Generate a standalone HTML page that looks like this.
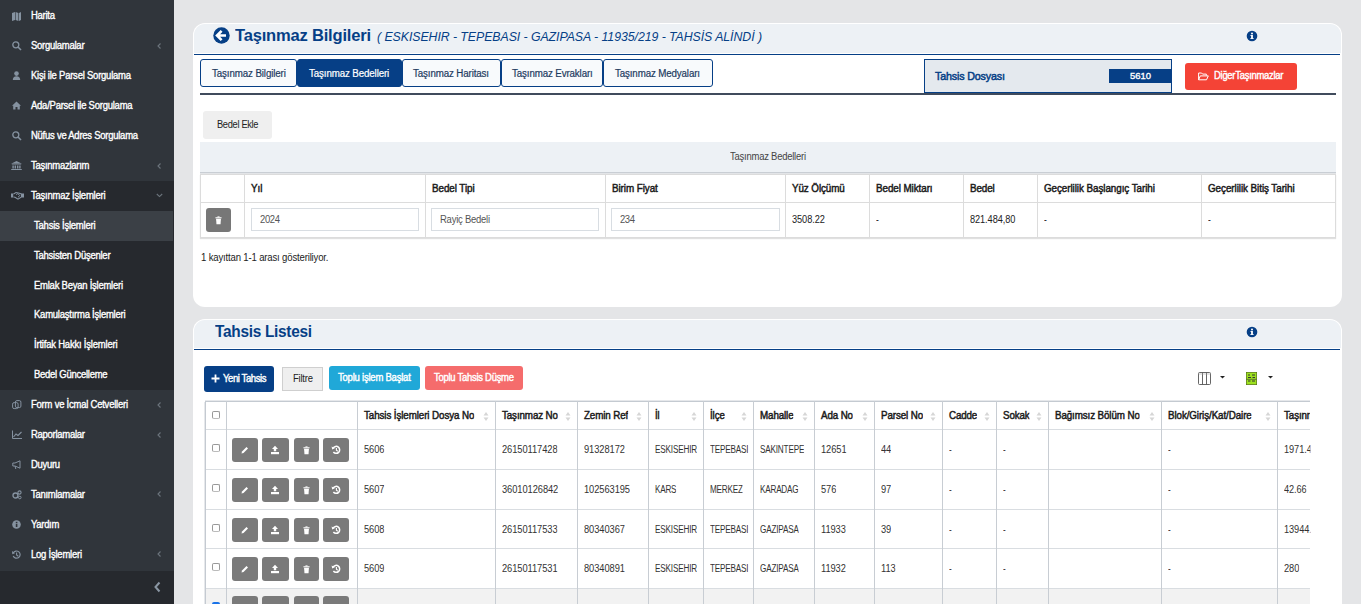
<!DOCTYPE html>
<html><head><meta charset="utf-8"><style>
html,body{margin:0;padding:0;width:1361px;height:604px;overflow:hidden;background:#e4e5e7;font-family:'Liberation Sans', sans-serif;}
body{position:relative;}
</style></head><body>
<div style="position:absolute;left:0px;top:0px;width:174px;height:604px;background:#30353b;;z-index:1"></div>
<div style="position:absolute;left:0px;top:181px;width:174px;height:209px;background:#26292e;;z-index:1"></div>
<div style="position:absolute;left:0px;top:211px;width:173px;height:30px;background:#3b4046;;z-index:1"></div>
<div style="position:absolute;left:0px;top:571px;width:174px;height:33px;background:#26292e;;z-index:1"></div>
<svg style="position:absolute;left:12px;top:11.5px;z-index:6" width="12" height="10" viewBox="0 0 12 10" overflow="visible"><path d="M0 1 L3 0 L3 8 L0 9 Z M3.6 0 L6.4 1 L6.4 9 L3.6 8 Z M7 1 L9 0 L9 8 L7 9 Z" fill="#8592a0"/></svg>
<svg style="position:absolute;left:12px;top:41.4px;z-index:6" width="12" height="10" viewBox="0 0 12 10" overflow="visible"><circle cx="3.8" cy="3.8" r="3" fill="none" stroke="#8592a0" stroke-width="1.3"/><path d="M6 6 L9 9" stroke="#8592a0" stroke-width="1.6"/></svg>
<svg style="position:absolute;left:157px;top:42.9px;z-index:6" width="5" height="6" viewBox="0 0 5 6"><path d="M3.5 0.5 L1 3 L3.5 5.5" fill="none" stroke="#6c757d" stroke-width="1.1"/></svg>
<svg style="position:absolute;left:12px;top:71.3px;z-index:6" width="12" height="10" viewBox="0 0 12 10" overflow="visible"><circle cx="4.5" cy="2.6" r="2.3" fill="#8592a0"/><path d="M0.8 9 Q0.8 5.2 4.5 5.2 Q8.2 5.2 8.2 9 Z" fill="#8592a0"/></svg>
<svg style="position:absolute;left:12px;top:101.19999999999999px;z-index:6" width="12" height="10" viewBox="0 0 12 10" overflow="visible"><path d="M0 4.8 L4.5 0.5 L9 4.8 L7.8 4.8 L7.8 8.5 L5.5 8.5 L5.5 6 L3.5 6 L3.5 8.5 L1.2 8.5 L1.2 4.8 Z" fill="#8592a0"/></svg>
<svg style="position:absolute;left:12px;top:131.1px;z-index:6" width="12" height="10" viewBox="0 0 12 10" overflow="visible"><circle cx="3.8" cy="3.8" r="3" fill="none" stroke="#8592a0" stroke-width="1.3"/><path d="M6 6 L9 9" stroke="#8592a0" stroke-width="1.6"/></svg>
<svg style="position:absolute;left:12px;top:161.0px;z-index:6" width="12" height="10" viewBox="0 0 12 10" overflow="visible"><path d="M-1 2.8 L4.5 0 L10 2.8 Z M-0.2 3.4 H9.2 V4.1 H-0.2 Z M0.4 4.5 H1.8 V7.6 H0.4Z M2.6 4.5 H4 V7.6 H2.6Z M5 4.5 H6.4 V7.6 H5Z M7.2 4.5 H8.6 V7.6 H7.2Z M-0.8 8 H9.8 V9 H-0.8Z" fill="#8592a0"/></svg>
<svg style="position:absolute;left:157px;top:162.5px;z-index:6" width="5" height="6" viewBox="0 0 5 6"><path d="M3.5 0.5 L1 3 L3.5 5.5" fill="none" stroke="#6c757d" stroke-width="1.1"/></svg>
<svg style="position:absolute;left:12px;top:190.89999999999998px;z-index:6" width="12" height="10" viewBox="0 0 12 10" overflow="visible"><path d="M-1 2.5 H1.2 V6.5 H-1 Z M10 2.5 H12 V6.5 H10 Z" fill="#8592a0"/><path d="M1.5 3 L4 1.5 L6.5 2 L9.5 3 V6 L6 8.2 L3 6.2 L1.5 6" fill="none" stroke="#8592a0" stroke-width="1.1"/><path d="M4.2 3.8 L5.8 2.6 L7.8 4.6 L6 6.2" fill="none" stroke="#8592a0" stroke-width="1"/></svg>
<svg style="position:absolute;left:156px;top:193.39999999999998px;z-index:6" width="7" height="5" viewBox="0 0 7 5"><path d="M0.8 1 L3.5 3.6 L6.2 1" fill="none" stroke="#6c757d" stroke-width="1.1"/></svg>
<svg style="position:absolute;left:12px;top:400.2px;z-index:6" width="12" height="10" viewBox="0 0 12 10" overflow="visible"><rect x="0.6" y="2.6" width="5.5" height="6" rx="1.5" fill="none" stroke="#8592a0" stroke-width="1"/><rect x="3.4" y="0.6" width="5.5" height="7" rx="1.5" fill="none" stroke="#8592a0" stroke-width="1"/></svg>
<svg style="position:absolute;left:157px;top:401.7px;z-index:6" width="5" height="6" viewBox="0 0 5 6"><path d="M3.5 0.5 L1 3 L3.5 5.5" fill="none" stroke="#6c757d" stroke-width="1.1"/></svg>
<svg style="position:absolute;left:12px;top:430.09999999999997px;z-index:6" width="12" height="10" viewBox="0 0 12 10" overflow="visible"><path d="M0.5 0.5 V8.5 H10" fill="none" stroke="#8592a0" stroke-width="1"/><path d="M1.5 7 L4 4 L6 5.5 L9.5 2" fill="none" stroke="#8592a0" stroke-width="1.1"/></svg>
<svg style="position:absolute;left:157px;top:431.59999999999997px;z-index:6" width="5" height="6" viewBox="0 0 5 6"><path d="M3.5 0.5 L1 3 L3.5 5.5" fill="none" stroke="#6c757d" stroke-width="1.1"/></svg>
<svg style="position:absolute;left:12px;top:460.0px;z-index:6" width="12" height="10" viewBox="0 0 12 10" overflow="visible"><path d="M0.8 3 H3 L8 0.8 V8.2 L3 6 H0.8 Z M3 6 L3.8 9" fill="none" stroke="#8592a0" stroke-width="1"/></svg>
<svg style="position:absolute;left:12px;top:489.9px;z-index:6" width="12" height="10" viewBox="0 0 12 10" overflow="visible"><circle cx="3.5" cy="5.5" r="2.5" fill="none" stroke="#8592a0" stroke-width="1.4"/><circle cx="7.5" cy="2.5" r="1.6" fill="none" stroke="#8592a0" stroke-width="1.1"/><circle cx="7.8" cy="7.5" r="1.3" fill="none" stroke="#8592a0" stroke-width="1"/></svg>
<svg style="position:absolute;left:157px;top:491.4px;z-index:6" width="5" height="6" viewBox="0 0 5 6"><path d="M3.5 0.5 L1 3 L3.5 5.5" fill="none" stroke="#6c757d" stroke-width="1.1"/></svg>
<svg style="position:absolute;left:12px;top:519.8px;z-index:6" width="12" height="10" viewBox="0 0 12 10" overflow="visible"><circle cx="4.5" cy="4.5" r="4.3" fill="#8592a0"/><rect x="3.8" y="3.8" width="1.6" height="3.2" fill="#30353b"/><rect x="3.8" y="1.8" width="1.6" height="1.3" fill="#30353b"/></svg>
<svg style="position:absolute;left:12px;top:549.6999999999999px;z-index:6" width="12" height="10" viewBox="0 0 12 10" overflow="visible"><path d="M1.3 3 A3.6 3.6 0 1 1 1.2 6" fill="none" stroke="#8592a0" stroke-width="1.2"/><path d="M0 1 L0.3 4.2 L3 3.2 Z" fill="#8592a0"/><path d="M4.6 2.5 V5 L6.3 6.2" fill="none" stroke="#8592a0" stroke-width="1.1"/></svg>
<svg style="position:absolute;left:157px;top:551.1999999999999px;z-index:6" width="5" height="6" viewBox="0 0 5 6"><path d="M3.5 0.5 L1 3 L3.5 5.5" fill="none" stroke="#6c757d" stroke-width="1.1"/></svg>
<svg style="position:absolute;left:153px;top:581px;z-index:6" width="9" height="12" viewBox="0 0 9 12"><path d="M6.5 1.5 L2.5 6 L6.5 10.5" fill="none" stroke="#8a96a3" stroke-width="2"/></svg>
<div style="position:absolute;left:175px;top:0px;width:1186px;height:604px;background:#e4e5e7;;z-index:0"></div>
<div style="position:absolute;left:193px;top:23px;width:1149px;height:284px;background:#fff;border-radius:12px;overflow:hidden;z-index:1"><div style="position:absolute;left:1px;top:1px;width:1147px;height:29px;background:#edf1f5;border-radius:11px 11px 0 0"></div><div style="position:absolute;left:1px;top:31px;width:1146px;height:1px;background:#063f86"></div></div>
<svg style="position:absolute;left:213px;top:27px;z-index:6" width="17" height="17" viewBox="0 0 17 17"><circle cx="8.5" cy="8.5" r="8.2" fill="#063f86"/><path d="M8.6 3.8 L4 8.5 L8.6 13.2 M4.3 8.5 H13" fill="none" stroke="#fff" stroke-width="2.6" stroke-linejoin="miter"/></svg>
<svg style="position:absolute;left:1245.5px;top:29.5px;z-index:6" width="12" height="12" viewBox="0 0 12 12"><circle cx="6" cy="6" r="5.3" fill="#063f86"/><rect x="5.1" y="5" width="1.8" height="3.6" fill="#fff"/><rect x="4.4" y="8" width="3.2" height="0.9" fill="#fff"/><rect x="4.4" y="5" width="1.6" height="0.8" fill="#fff"/><circle cx="6" cy="3.5" r="1" fill="#fff"/></svg>
<div style="position:absolute;left:200px;top:59px;width:97px;height:28px;background:#f8fafc;box-sizing:border-box;border:1px solid #063f86;border-radius:3px;z-index:3"></div>
<div style="position:absolute;left:297px;top:59px;width:105px;height:28px;background:#063f86;box-sizing:border-box;border:1px solid #063f86;border-radius:3px;z-index:3"></div>
<div style="position:absolute;left:402px;top:59px;width:99px;height:28px;background:#f8fafc;box-sizing:border-box;border:1px solid #063f86;border-radius:3px;z-index:3"></div>
<div style="position:absolute;left:501px;top:59px;width:102px;height:28px;background:#f8fafc;box-sizing:border-box;border:1px solid #063f86;border-radius:3px;z-index:3"></div>
<div style="position:absolute;left:603px;top:59px;width:110px;height:28px;background:#f8fafc;box-sizing:border-box;border:1px solid #063f86;border-radius:3px;z-index:3"></div>
<div style="position:absolute;left:200px;top:93px;width:1136px;height:2px;background:#404b5c;;z-index:2"></div>
<div style="position:absolute;left:924px;top:59px;width:248px;height:34px;background:#e4e9ee;box-sizing:border-box;border:1px solid #063f86;z-index:3"></div>
<div style="position:absolute;left:1109px;top:69px;width:62px;height:14px;background:#063f86;;z-index:4"></div>
<div style="position:absolute;left:1185px;top:63px;width:112px;height:27px;background:#f44336;border-radius:3px;z-index:3"></div>
<svg style="position:absolute;left:1197.5px;top:71.5px;z-index:6" width="11" height="9" viewBox="0 0 11 9"><path d="M0.6 7.8 V1 H3.6 L4.6 2.1 H8.3 V3.6 M0.6 7.8 L2.3 3.9 H10.3 L8.5 7.8 Z" fill="none" stroke="#fff" stroke-width="1" stroke-linejoin="round"/></svg>
<div style="position:absolute;left:203px;top:111px;width:69px;height:28px;background:#efefef;border-radius:3px;z-index:3"></div>
<div style="position:absolute;left:200px;top:142px;width:1136px;height:30px;background:#edf1f5;;z-index:2"></div>
<div style="position:absolute;left:200px;top:172px;width:1136px;height:1px;background:#c9ced4;;z-index:2"></div>
<div style="position:absolute;left:200px;top:173px;width:1136px;height:1px;background:#e3e5e8;;z-index:2"></div>
<div style="position:absolute;left:200px;top:174px;width:1136px;height:64px;background:#fff;box-sizing:border-box;border:1px solid #dcdcdc;box-shadow:0 1px 1px rgba(0,0,0,0.12);z-index:3"></div>
<div style="position:absolute;left:200px;top:202px;width:1136px;height:1px;background:#dcdcdc;;z-index:4"></div>
<div style="position:absolute;left:244px;top:175px;width:1px;height:62px;background:#dcdcdc;;z-index:4"></div>
<div style="position:absolute;left:425px;top:175px;width:1px;height:62px;background:#dcdcdc;;z-index:4"></div>
<div style="position:absolute;left:605px;top:175px;width:1px;height:62px;background:#dcdcdc;;z-index:4"></div>
<div style="position:absolute;left:785px;top:175px;width:1px;height:62px;background:#dcdcdc;;z-index:4"></div>
<div style="position:absolute;left:869px;top:175px;width:1px;height:62px;background:#dcdcdc;;z-index:4"></div>
<div style="position:absolute;left:963px;top:175px;width:1px;height:62px;background:#dcdcdc;;z-index:4"></div>
<div style="position:absolute;left:1037px;top:175px;width:1px;height:62px;background:#dcdcdc;;z-index:4"></div>
<div style="position:absolute;left:1201px;top:175px;width:1px;height:62px;background:#dcdcdc;;z-index:4"></div>
<div style="position:absolute;left:206px;top:208px;width:25px;height:24px;background:#777;border-radius:3px;z-index:5"></div>
<svg style="position:absolute;left:215.0px;top:215.5px;z-index:12" width="7" height="9" viewBox="0 0 8 10"><rect x="0.5" y="1.3" width="7" height="1.2" fill="#fff"/><rect x="2.8" y="0.3" width="2.4" height="1.2" fill="#fff"/><path d="M1.2 3 H6.8 L6.3 9.2 H1.7 Z" fill="#fff"/></svg>
<div style="position:absolute;left:251px;top:208px;width:168px;height:23px;background:#fff;box-sizing:border-box;border:1px solid #d8dde2;z-index:5"></div>
<div style="position:absolute;left:431px;top:208px;width:168px;height:23px;background:#fff;box-sizing:border-box;border:1px solid #d8dde2;z-index:5"></div>
<div style="position:absolute;left:611px;top:208px;width:169px;height:23px;background:#fff;box-sizing:border-box;border:1px solid #d8dde2;z-index:5"></div>
<div style="position:absolute;left:193px;top:319px;width:1149px;height:300px;background:#fff;border-radius:12px;overflow:hidden;z-index:1"><div style="position:absolute;left:1px;top:1px;width:1147px;height:28px;background:#edf1f5;border-radius:11px 11px 0 0"></div><div style="position:absolute;left:1px;top:30px;width:1146px;height:1px;background:#063f86"></div></div>
<svg style="position:absolute;left:1245.5px;top:325.5px;z-index:6" width="12" height="12" viewBox="0 0 12 12"><circle cx="6" cy="6" r="5.3" fill="#063f86"/><rect x="5.1" y="5" width="1.8" height="3.6" fill="#fff"/><rect x="4.4" y="8" width="3.2" height="0.9" fill="#fff"/><rect x="4.4" y="5" width="1.6" height="0.8" fill="#fff"/><circle cx="6" cy="3.5" r="1" fill="#fff"/></svg>
<div style="position:absolute;left:204px;top:366px;width:70px;height:26px;background:#063f86;border-radius:3px;z-index:3"></div>
<svg style="position:absolute;left:211px;top:374px;z-index:6" width="9" height="9" viewBox="0 0 9 9"><path d="M4.5 0.5 V8.5 M0.5 4.5 H8.5" stroke="#fff" stroke-width="1.8"/></svg>
<div style="position:absolute;left:282px;top:367px;width:41px;height:24px;background:#efefef;box-sizing:border-box;border:1px solid #cfcfcf;z-index:3"></div>
<div style="position:absolute;left:329px;top:366px;width:91px;height:24px;background:#20a8d8;border-radius:3px;z-index:3"></div>
<div style="position:absolute;left:425px;top:366px;width:98px;height:24px;background:#f56c6c;border-radius:3px;z-index:3"></div>
<svg style="position:absolute;left:1198px;top:372px;z-index:6" width="13" height="13" viewBox="0 0 13 13"><rect x="0.5" y="0.5" width="12" height="12" rx="1" fill="#fff" stroke="#555" stroke-width="0.9"/><path d="M4.5 0.5 V12.5 M8.5 0.5 V12.5" stroke="#555" stroke-width="0.9"/><path d="M0.5 2 H12.5" stroke="#aaa" stroke-width="0.6"/></svg>
<svg style="position:absolute;left:1220px;top:376px;z-index:6" width="5" height="3" viewBox="0 0 5 3"><path d="M0 0 H5 L2.5 2.5 Z" fill="#222"/></svg>
<svg style="position:absolute;left:1246px;top:372px;z-index:6" width="11" height="13" viewBox="0 0 11 13"><rect x="0.4" y="0.4" width="10.2" height="12.2" fill="#9de21f" stroke="#5a7d10" stroke-width="0.8"/><path d="M2 3 H4 M6 3 H9 M2 5.5 H5 M6.5 5.5 H9 M2 9 H4.5 M6 9 H9" stroke="#333" stroke-width="1"/><path d="M0.5 7.3 H10.5" stroke="#333" stroke-width="0.6"/></svg>
<svg style="position:absolute;left:1268px;top:376px;z-index:6" width="5" height="3" viewBox="0 0 5 3"><path d="M0 0 H5 L2.5 2.5 Z" fill="#222"/></svg>
<div style="position:absolute;left:193px;top:395px;width:1117px;height:209px;overflow:hidden;z-index:3">
<div style="position:absolute;left:12px;top:194px;width:1200px;height:30px;background:#f2f2f2;;z-index:1"></div>
<div style="position:absolute;left:12px;top:5px;width:1200px;height:1px;background:#e6e8eb;;z-index:2"></div>
<div style="position:absolute;left:12px;top:6px;width:1200px;height:1px;background:#c4cad1;;z-index:2"></div>
<div style="position:absolute;left:12px;top:34px;width:1200px;height:1px;background:#d9dde1;;z-index:2"></div>
<div style="position:absolute;left:12px;top:74px;width:1200px;height:1px;background:#d9dde1;;z-index:2"></div>
<div style="position:absolute;left:12px;top:114px;width:1200px;height:1px;background:#d9dde1;;z-index:2"></div>
<div style="position:absolute;left:12px;top:153px;width:1200px;height:1px;background:#d9dde1;;z-index:2"></div>
<div style="position:absolute;left:12px;top:193px;width:1200px;height:1px;background:#d9dde1;;z-index:2"></div>
<div style="position:absolute;left:12px;top:6px;width:1px;height:220px;background:#c4cad1;;z-index:2"></div>
<div style="position:absolute;left:33px;top:6px;width:1px;height:220px;background:#c8cdd3;;z-index:2"></div>
<div style="position:absolute;left:164px;top:6px;width:1px;height:220px;background:#c8cdd3;;z-index:2"></div>
<div style="position:absolute;left:302px;top:6px;width:1px;height:220px;background:#c8cdd3;;z-index:2"></div>
<div style="position:absolute;left:384px;top:6px;width:1px;height:220px;background:#c8cdd3;;z-index:2"></div>
<div style="position:absolute;left:455px;top:6px;width:1px;height:220px;background:#c8cdd3;;z-index:2"></div>
<div style="position:absolute;left:510px;top:6px;width:1px;height:220px;background:#c8cdd3;;z-index:2"></div>
<div style="position:absolute;left:560px;top:6px;width:1px;height:220px;background:#c8cdd3;;z-index:2"></div>
<div style="position:absolute;left:621px;top:6px;width:1px;height:220px;background:#c8cdd3;;z-index:2"></div>
<div style="position:absolute;left:681px;top:6px;width:1px;height:220px;background:#c8cdd3;;z-index:2"></div>
<div style="position:absolute;left:749px;top:6px;width:1px;height:220px;background:#c8cdd3;;z-index:2"></div>
<div style="position:absolute;left:803px;top:6px;width:1px;height:220px;background:#c8cdd3;;z-index:2"></div>
<div style="position:absolute;left:855px;top:6px;width:1px;height:220px;background:#c8cdd3;;z-index:2"></div>
<div style="position:absolute;left:968px;top:6px;width:1px;height:220px;background:#c8cdd3;;z-index:2"></div>
<div style="position:absolute;left:1084px;top:6px;width:1px;height:220px;background:#c8cdd3;;z-index:2"></div>
<div style="position:absolute;left:11px;top:7px;width:1px;height:220px;background:#e6e8eb;;z-index:2"></div>
</div>
<svg style="position:absolute;left:483px;top:411px;z-index:8" width="6" height="11" viewBox="0 0 6 11"><path d="M0.5 4.5 L3 1 L5.5 4.5 Z M0.5 6.5 L3 10 L5.5 6.5 Z" fill="#d6d6d6"/></svg>
<svg style="position:absolute;left:565px;top:411px;z-index:8" width="6" height="11" viewBox="0 0 6 11"><path d="M0.5 4.5 L3 1 L5.5 4.5 Z M0.5 6.5 L3 10 L5.5 6.5 Z" fill="#d6d6d6"/></svg>
<svg style="position:absolute;left:636px;top:411px;z-index:8" width="6" height="11" viewBox="0 0 6 11"><path d="M0.5 4.5 L3 1 L5.5 4.5 Z M0.5 6.5 L3 10 L5.5 6.5 Z" fill="#d6d6d6"/></svg>
<svg style="position:absolute;left:691px;top:411px;z-index:8" width="6" height="11" viewBox="0 0 6 11"><path d="M0.5 4.5 L3 1 L5.5 4.5 Z M0.5 6.5 L3 10 L5.5 6.5 Z" fill="#d6d6d6"/></svg>
<svg style="position:absolute;left:741px;top:411px;z-index:8" width="6" height="11" viewBox="0 0 6 11"><path d="M0.5 4.5 L3 1 L5.5 4.5 Z M0.5 6.5 L3 10 L5.5 6.5 Z" fill="#d6d6d6"/></svg>
<svg style="position:absolute;left:802px;top:411px;z-index:8" width="6" height="11" viewBox="0 0 6 11"><path d="M0.5 4.5 L3 1 L5.5 4.5 Z M0.5 6.5 L3 10 L5.5 6.5 Z" fill="#d6d6d6"/></svg>
<svg style="position:absolute;left:862px;top:411px;z-index:8" width="6" height="11" viewBox="0 0 6 11"><path d="M0.5 4.5 L3 1 L5.5 4.5 Z M0.5 6.5 L3 10 L5.5 6.5 Z" fill="#d6d6d6"/></svg>
<svg style="position:absolute;left:930px;top:411px;z-index:8" width="6" height="11" viewBox="0 0 6 11"><path d="M0.5 4.5 L3 1 L5.5 4.5 Z M0.5 6.5 L3 10 L5.5 6.5 Z" fill="#d6d6d6"/></svg>
<svg style="position:absolute;left:984px;top:411px;z-index:8" width="6" height="11" viewBox="0 0 6 11"><path d="M0.5 4.5 L3 1 L5.5 4.5 Z M0.5 6.5 L3 10 L5.5 6.5 Z" fill="#d6d6d6"/></svg>
<svg style="position:absolute;left:1036px;top:411px;z-index:8" width="6" height="11" viewBox="0 0 6 11"><path d="M0.5 4.5 L3 1 L5.5 4.5 Z M0.5 6.5 L3 10 L5.5 6.5 Z" fill="#d6d6d6"/></svg>
<svg style="position:absolute;left:1149px;top:411px;z-index:8" width="6" height="11" viewBox="0 0 6 11"><path d="M0.5 4.5 L3 1 L5.5 4.5 Z M0.5 6.5 L3 10 L5.5 6.5 Z" fill="#d6d6d6"/></svg>
<svg style="position:absolute;left:1265px;top:411px;z-index:8" width="6" height="11" viewBox="0 0 6 11"><path d="M0.5 4.5 L3 1 L5.5 4.5 Z M0.5 6.5 L3 10 L5.5 6.5 Z" fill="#d6d6d6"/></svg>
<div style="position:absolute;left:212px;top:411px;width:8px;height:8px;background:#fff;box-sizing:border-box;border:1px solid #999;border-bottom-color:#bbb;border-radius:2px;z-index:8"></div>
<div style="position:absolute;left:212px;top:444px;width:8px;height:8px;background:#fff;box-sizing:border-box;border:1px solid #999;border-bottom-color:#bbb;border-radius:2px;z-index:8"></div>
<div style="position:absolute;left:232px;top:438px;width:26px;height:24px;background:#7a7a7a;border-radius:3px;z-index:8"></div>
<div style="position:absolute;left:262px;top:438px;width:27px;height:24px;background:#7a7a7a;border-radius:3px;z-index:8"></div>
<div style="position:absolute;left:294px;top:438px;width:25px;height:24px;background:#7a7a7a;border-radius:3px;z-index:8"></div>
<div style="position:absolute;left:323px;top:438px;width:26px;height:24px;background:#7a7a7a;border-radius:3px;z-index:8"></div>
<svg style="position:absolute;left:240px;top:445px;z-index:9" width="10" height="10" viewBox="0 0 10 10"><path d="M1.5 8.5 L2 6.5 L6.5 2 L8 3.5 L3.5 8 Z" fill="#fff"/></svg>
<svg style="position:absolute;left:270px;top:445px;z-index:9" width="10" height="10" viewBox="0 0 10 10"><path d="M5 0.8 L8 4 H6.2 V6.3 H3.8 V4 H2 Z" fill="#fff"/><rect x="1" y="7" width="8" height="2.2" fill="#fff"/></svg>
<svg style="position:absolute;left:303.0px;top:445.5px;z-index:12" width="7" height="9" viewBox="0 0 8 10"><rect x="0.5" y="1.3" width="7" height="1.2" fill="#fff"/><rect x="2.8" y="0.3" width="2.4" height="1.2" fill="#fff"/><path d="M1.2 3 H6.8 L6.3 9.2 H1.7 Z" fill="#fff"/></svg>
<svg style="position:absolute;left:331px;top:445px;z-index:9" width="10" height="10" viewBox="0 0 10 10"><path d="M2.2 3 A3.5 3.5 0 1 1 2.4 7" fill="none" stroke="#fff" stroke-width="1.5"/><path d="M0.6 1.4 L1.2 4.6 L3.8 3.2 Z" fill="#fff"/><path d="M5.4 3 V5.3 L6.8 6.2" fill="none" stroke="#fff" stroke-width="1.1"/></svg>
<div style="position:absolute;left:212px;top:484px;width:8px;height:8px;background:#fff;box-sizing:border-box;border:1px solid #999;border-bottom-color:#bbb;border-radius:2px;z-index:8"></div>
<div style="position:absolute;left:232px;top:478px;width:26px;height:24px;background:#7a7a7a;border-radius:3px;z-index:8"></div>
<div style="position:absolute;left:262px;top:478px;width:27px;height:24px;background:#7a7a7a;border-radius:3px;z-index:8"></div>
<div style="position:absolute;left:294px;top:478px;width:25px;height:24px;background:#7a7a7a;border-radius:3px;z-index:8"></div>
<div style="position:absolute;left:323px;top:478px;width:26px;height:24px;background:#7a7a7a;border-radius:3px;z-index:8"></div>
<svg style="position:absolute;left:240px;top:485px;z-index:9" width="10" height="10" viewBox="0 0 10 10"><path d="M1.5 8.5 L2 6.5 L6.5 2 L8 3.5 L3.5 8 Z" fill="#fff"/></svg>
<svg style="position:absolute;left:270px;top:485px;z-index:9" width="10" height="10" viewBox="0 0 10 10"><path d="M5 0.8 L8 4 H6.2 V6.3 H3.8 V4 H2 Z" fill="#fff"/><rect x="1" y="7" width="8" height="2.2" fill="#fff"/></svg>
<svg style="position:absolute;left:303.0px;top:485.5px;z-index:12" width="7" height="9" viewBox="0 0 8 10"><rect x="0.5" y="1.3" width="7" height="1.2" fill="#fff"/><rect x="2.8" y="0.3" width="2.4" height="1.2" fill="#fff"/><path d="M1.2 3 H6.8 L6.3 9.2 H1.7 Z" fill="#fff"/></svg>
<svg style="position:absolute;left:331px;top:485px;z-index:9" width="10" height="10" viewBox="0 0 10 10"><path d="M2.2 3 A3.5 3.5 0 1 1 2.4 7" fill="none" stroke="#fff" stroke-width="1.5"/><path d="M0.6 1.4 L1.2 4.6 L3.8 3.2 Z" fill="#fff"/><path d="M5.4 3 V5.3 L6.8 6.2" fill="none" stroke="#fff" stroke-width="1.1"/></svg>
<div style="position:absolute;left:212px;top:524px;width:8px;height:8px;background:#fff;box-sizing:border-box;border:1px solid #999;border-bottom-color:#bbb;border-radius:2px;z-index:8"></div>
<div style="position:absolute;left:232px;top:518px;width:26px;height:24px;background:#7a7a7a;border-radius:3px;z-index:8"></div>
<div style="position:absolute;left:262px;top:518px;width:27px;height:24px;background:#7a7a7a;border-radius:3px;z-index:8"></div>
<div style="position:absolute;left:294px;top:518px;width:25px;height:24px;background:#7a7a7a;border-radius:3px;z-index:8"></div>
<div style="position:absolute;left:323px;top:518px;width:26px;height:24px;background:#7a7a7a;border-radius:3px;z-index:8"></div>
<svg style="position:absolute;left:240px;top:525px;z-index:9" width="10" height="10" viewBox="0 0 10 10"><path d="M1.5 8.5 L2 6.5 L6.5 2 L8 3.5 L3.5 8 Z" fill="#fff"/></svg>
<svg style="position:absolute;left:270px;top:525px;z-index:9" width="10" height="10" viewBox="0 0 10 10"><path d="M5 0.8 L8 4 H6.2 V6.3 H3.8 V4 H2 Z" fill="#fff"/><rect x="1" y="7" width="8" height="2.2" fill="#fff"/></svg>
<svg style="position:absolute;left:303.0px;top:525.5px;z-index:12" width="7" height="9" viewBox="0 0 8 10"><rect x="0.5" y="1.3" width="7" height="1.2" fill="#fff"/><rect x="2.8" y="0.3" width="2.4" height="1.2" fill="#fff"/><path d="M1.2 3 H6.8 L6.3 9.2 H1.7 Z" fill="#fff"/></svg>
<svg style="position:absolute;left:331px;top:525px;z-index:9" width="10" height="10" viewBox="0 0 10 10"><path d="M2.2 3 A3.5 3.5 0 1 1 2.4 7" fill="none" stroke="#fff" stroke-width="1.5"/><path d="M0.6 1.4 L1.2 4.6 L3.8 3.2 Z" fill="#fff"/><path d="M5.4 3 V5.3 L6.8 6.2" fill="none" stroke="#fff" stroke-width="1.1"/></svg>
<div style="position:absolute;left:212px;top:563px;width:8px;height:8px;background:#fff;box-sizing:border-box;border:1px solid #999;border-bottom-color:#bbb;border-radius:2px;z-index:8"></div>
<div style="position:absolute;left:232px;top:557px;width:26px;height:24px;background:#7a7a7a;border-radius:3px;z-index:8"></div>
<div style="position:absolute;left:262px;top:557px;width:27px;height:24px;background:#7a7a7a;border-radius:3px;z-index:8"></div>
<div style="position:absolute;left:294px;top:557px;width:25px;height:24px;background:#7a7a7a;border-radius:3px;z-index:8"></div>
<div style="position:absolute;left:323px;top:557px;width:26px;height:24px;background:#7a7a7a;border-radius:3px;z-index:8"></div>
<svg style="position:absolute;left:240px;top:564px;z-index:9" width="10" height="10" viewBox="0 0 10 10"><path d="M1.5 8.5 L2 6.5 L6.5 2 L8 3.5 L3.5 8 Z" fill="#fff"/></svg>
<svg style="position:absolute;left:270px;top:564px;z-index:9" width="10" height="10" viewBox="0 0 10 10"><path d="M5 0.8 L8 4 H6.2 V6.3 H3.8 V4 H2 Z" fill="#fff"/><rect x="1" y="7" width="8" height="2.2" fill="#fff"/></svg>
<svg style="position:absolute;left:303.0px;top:564.5px;z-index:12" width="7" height="9" viewBox="0 0 8 10"><rect x="0.5" y="1.3" width="7" height="1.2" fill="#fff"/><rect x="2.8" y="0.3" width="2.4" height="1.2" fill="#fff"/><path d="M1.2 3 H6.8 L6.3 9.2 H1.7 Z" fill="#fff"/></svg>
<svg style="position:absolute;left:331px;top:564px;z-index:9" width="10" height="10" viewBox="0 0 10 10"><path d="M2.2 3 A3.5 3.5 0 1 1 2.4 7" fill="none" stroke="#fff" stroke-width="1.5"/><path d="M0.6 1.4 L1.2 4.6 L3.8 3.2 Z" fill="#fff"/><path d="M5.4 3 V5.3 L6.8 6.2" fill="none" stroke="#fff" stroke-width="1.1"/></svg>
<div style="position:absolute;left:212px;top:602px;width:8px;height:8px;background:#1a73e8;border-radius:2px;z-index:8"></div>
<div style="position:absolute;left:232px;top:596px;width:26px;height:24px;background:#7a7a7a;border-radius:3px;z-index:8"></div>
<div style="position:absolute;left:262px;top:596px;width:27px;height:24px;background:#7a7a7a;border-radius:3px;z-index:8"></div>
<div style="position:absolute;left:294px;top:596px;width:25px;height:24px;background:#7a7a7a;border-radius:3px;z-index:8"></div>
<div style="position:absolute;left:323px;top:596px;width:26px;height:24px;background:#7a7a7a;border-radius:3px;z-index:8"></div>
<div style="position:absolute;left:31.00px;top:10.45px;font-size:10px;line-height:11.170px;height:11.170px;font-weight:normal;font-style:normal;color:#ffffff;letter-spacing:-0.267px;white-space:nowrap;transform:scaleX(0.9474);transform-origin:0 0;-webkit-text-stroke:0.35px #ffffff;z-index:5">Harita</div>
<div style="position:absolute;left:31.00px;top:40.35px;font-size:10px;line-height:11.170px;height:11.170px;font-weight:normal;font-style:normal;color:#ffffff;letter-spacing:-0.270px;white-space:nowrap;transform:scaleX(0.9474);transform-origin:0 0;-webkit-text-stroke:0.35px #ffffff;z-index:5">Sorgulamalar</div>
<div style="position:absolute;left:31.00px;top:70.25px;font-size:10px;line-height:11.170px;height:11.170px;font-weight:normal;font-style:normal;color:#ffffff;letter-spacing:-0.232px;white-space:nowrap;transform:scaleX(0.9474);transform-origin:0 0;-webkit-text-stroke:0.35px #ffffff;z-index:5">Kişi ile Parsel Sorgulama</div>
<div style="position:absolute;left:31.00px;top:100.15px;font-size:10px;line-height:11.170px;height:11.170px;font-weight:normal;font-style:normal;color:#ffffff;letter-spacing:-0.245px;white-space:nowrap;transform:scaleX(0.9474);transform-origin:0 0;-webkit-text-stroke:0.35px #ffffff;z-index:5">Ada/Parsel ile Sorgulama</div>
<div style="position:absolute;left:31.00px;top:130.05px;font-size:10px;line-height:11.170px;height:11.170px;font-weight:normal;font-style:normal;color:#ffffff;letter-spacing:-0.259px;white-space:nowrap;transform:scaleX(0.9474);transform-origin:0 0;-webkit-text-stroke:0.35px #ffffff;z-index:5">Nüfus ve Adres Sorgulama</div>
<div style="position:absolute;left:31.00px;top:159.95px;font-size:10px;line-height:11.170px;height:11.170px;font-weight:normal;font-style:normal;color:#ffffff;letter-spacing:-0.271px;white-space:nowrap;transform:scaleX(0.9474);transform-origin:0 0;-webkit-text-stroke:0.35px #ffffff;z-index:5">Taşınmazlarım</div>
<div style="position:absolute;left:31.00px;top:189.85px;font-size:10px;line-height:11.170px;height:11.170px;font-weight:normal;font-style:normal;color:#ffffff;letter-spacing:-0.244px;white-space:nowrap;transform:scaleX(0.9474);transform-origin:0 0;-webkit-text-stroke:0.35px #ffffff;z-index:5">Taşınmaz İşlemleri</div>
<div style="position:absolute;left:34.00px;top:219.75px;font-size:10px;line-height:11.170px;height:11.170px;font-weight:normal;font-style:normal;color:#ffffff;letter-spacing:-0.228px;white-space:nowrap;transform:scaleX(0.9474);transform-origin:0 0;-webkit-text-stroke:0.35px #ffffff;z-index:5">Tahsis İşlemleri</div>
<div style="position:absolute;left:34.00px;top:249.65px;font-size:10px;line-height:11.170px;height:11.170px;font-weight:normal;font-style:normal;color:#ffffff;letter-spacing:-0.250px;white-space:nowrap;transform:scaleX(0.9474);transform-origin:0 0;-webkit-text-stroke:0.35px #ffffff;z-index:5">Tahsisten Düşenler</div>
<div style="position:absolute;left:34.00px;top:279.55px;font-size:10px;line-height:11.170px;height:11.170px;font-weight:normal;font-style:normal;color:#ffffff;letter-spacing:-0.247px;white-space:nowrap;transform:scaleX(0.9474);transform-origin:0 0;-webkit-text-stroke:0.35px #ffffff;z-index:5">Emlak Beyan İşlemleri</div>
<div style="position:absolute;left:34.00px;top:309.45px;font-size:10px;line-height:11.170px;height:11.170px;font-weight:normal;font-style:normal;color:#ffffff;letter-spacing:-0.242px;white-space:nowrap;transform:scaleX(0.9474);transform-origin:0 0;-webkit-text-stroke:0.35px #ffffff;z-index:5">Kamulaştırma İşlemleri</div>
<div style="position:absolute;left:34.00px;top:339.35px;font-size:10px;line-height:11.170px;height:11.170px;font-weight:normal;font-style:normal;color:#ffffff;letter-spacing:-0.211px;white-space:nowrap;transform:scaleX(0.9474);transform-origin:0 0;-webkit-text-stroke:0.35px #ffffff;z-index:5">İrtifak Hakkı İşlemleri</div>
<div style="position:absolute;left:34.00px;top:369.25px;font-size:10px;line-height:11.170px;height:11.170px;font-weight:normal;font-style:normal;color:#ffffff;letter-spacing:-0.272px;white-space:nowrap;transform:scaleX(0.9474);transform-origin:0 0;-webkit-text-stroke:0.35px #ffffff;z-index:5">Bedel Güncelleme</div>
<div style="position:absolute;left:31.00px;top:399.15px;font-size:10px;line-height:11.170px;height:11.170px;font-weight:normal;font-style:normal;color:#ffffff;letter-spacing:-0.234px;white-space:nowrap;transform:scaleX(0.9474);transform-origin:0 0;-webkit-text-stroke:0.35px #ffffff;z-index:5">Form ve İcmal Cetvelleri</div>
<div style="position:absolute;left:31.00px;top:429.05px;font-size:10px;line-height:11.170px;height:11.170px;font-weight:normal;font-style:normal;color:#ffffff;letter-spacing:-0.273px;white-space:nowrap;transform:scaleX(0.9474);transform-origin:0 0;-webkit-text-stroke:0.35px #ffffff;z-index:5">Raporlamalar</div>
<div style="position:absolute;left:31.00px;top:458.95px;font-size:10px;line-height:11.170px;height:11.170px;font-weight:normal;font-style:normal;color:#ffffff;letter-spacing:-0.322px;white-space:nowrap;transform:scaleX(0.9474);transform-origin:0 0;-webkit-text-stroke:0.35px #ffffff;z-index:5">Duyuru</div>
<div style="position:absolute;left:31.00px;top:488.85px;font-size:10px;line-height:11.170px;height:11.170px;font-weight:normal;font-style:normal;color:#ffffff;letter-spacing:-0.273px;white-space:nowrap;transform:scaleX(0.9474);transform-origin:0 0;-webkit-text-stroke:0.35px #ffffff;z-index:5">Tanımlamalar</div>
<div style="position:absolute;left:31.00px;top:518.75px;font-size:10px;line-height:11.170px;height:11.170px;font-weight:normal;font-style:normal;color:#ffffff;letter-spacing:-0.315px;white-space:nowrap;transform:scaleX(0.9474);transform-origin:0 0;-webkit-text-stroke:0.35px #ffffff;z-index:5">Yardım</div>
<div style="position:absolute;left:31.00px;top:548.65px;font-size:10px;line-height:11.170px;height:11.170px;font-weight:normal;font-style:normal;color:#ffffff;letter-spacing:-0.236px;white-space:nowrap;transform:scaleX(0.9474);transform-origin:0 0;-webkit-text-stroke:0.35px #ffffff;z-index:5">Log İşlemleri</div>
<div style="position:absolute;left:235.00px;top:26.41px;font-size:17px;line-height:18.989px;height:18.989px;font-weight:bold;font-style:normal;color:#063f86;letter-spacing:-0.214px;white-space:nowrap;transform:scaleX(0.9739);transform-origin:0 0;z-index:5">Taşınmaz Bilgileri</div>
<div style="position:absolute;left:377.00px;top:30.44px;font-size:13px;line-height:14.521px;height:14.521px;font-weight:normal;font-style:italic;color:#063f86;letter-spacing:-0.061px;white-space:nowrap;transform:scaleX(0.9475);transform-origin:0 0;z-index:5">( ESKISEHIR - TEPEBASI - GAZIPASA - 11935/219 - TAHSİS ALİNDİ )</div>
<div style="position:absolute;left:211.54px;top:67.95px;font-size:10px;line-height:11.170px;height:11.170px;font-weight:normal;font-style:normal;color:#1e3a5f;letter-spacing:-0.114px;white-space:nowrap;transform:scaleX(0.9744);transform-origin:0 0;-webkit-text-stroke:0.2px #1e3a5f;z-index:5">Taşınmaz Bilgileri</div>
<div style="position:absolute;left:309.37px;top:67.95px;font-size:10px;line-height:11.170px;height:11.170px;font-weight:normal;font-style:normal;color:#fff;letter-spacing:-0.124px;white-space:nowrap;transform:scaleX(0.9744);transform-origin:0 0;-webkit-text-stroke:0.2px #fff;z-index:5">Taşınmaz Bedelleri</div>
<div style="position:absolute;left:413.49px;top:67.95px;font-size:10px;line-height:11.170px;height:11.170px;font-weight:normal;font-style:normal;color:#1e3a5f;letter-spacing:-0.125px;white-space:nowrap;transform:scaleX(0.9744);transform-origin:0 0;-webkit-text-stroke:0.2px #1e3a5f;z-index:5">Taşınmaz Haritası</div>
<div style="position:absolute;left:511.61px;top:67.95px;font-size:10px;line-height:11.170px;height:11.170px;font-weight:normal;font-style:normal;color:#1e3a5f;letter-spacing:-0.125px;white-space:nowrap;transform:scaleX(0.9744);transform-origin:0 0;-webkit-text-stroke:0.2px #1e3a5f;z-index:5">Taşınmaz Evrakları</div>
<div style="position:absolute;left:615.49px;top:67.95px;font-size:10px;line-height:11.170px;height:11.170px;font-weight:normal;font-style:normal;color:#1e3a5f;letter-spacing:-0.132px;white-space:nowrap;transform:scaleX(0.9744);transform-origin:0 0;-webkit-text-stroke:0.2px #1e3a5f;z-index:5">Taşınmaz Medyaları</div>
<div style="position:absolute;left:935.00px;top:69.55px;font-size:11px;line-height:12.287px;height:12.287px;font-weight:normal;font-style:normal;color:#063f86;letter-spacing:-0.153px;white-space:nowrap;transform:scaleX(0.9723);transform-origin:0 0;-webkit-text-stroke:0.5px #063f86;z-index:5">Tahsis Dosyası</div>
<div style="position:absolute;left:1129.50px;top:70.60px;font-size:9.5px;line-height:10.611px;height:10.611px;font-weight:normal;font-style:normal;color:#fff;letter-spacing:-0.023px;white-space:nowrap;transform:scaleX(0.9967);transform-origin:0 0;-webkit-text-stroke:0.35px #fff;z-index:5">5610</div>
<div style="position:absolute;left:1213.50px;top:70.45px;font-size:10px;line-height:11.170px;height:11.170px;font-weight:normal;font-style:normal;color:#fff;letter-spacing:-0.277px;white-space:nowrap;transform:scaleX(0.9436);transform-origin:0 0;-webkit-text-stroke:0.4px #fff;z-index:5">DiğerTaşınmazlar</div>
<div style="position:absolute;left:216.75px;top:119.25px;font-size:10px;line-height:11.170px;height:11.170px;font-weight:normal;font-style:normal;color:#222;letter-spacing:-0.351px;white-space:nowrap;transform:scaleX(0.9293);transform-origin:0 0;z-index:5">Bedel Ekle</div>
<div style="position:absolute;left:729.98px;top:150.95px;font-size:10px;line-height:11.170px;height:11.170px;font-weight:normal;font-style:normal;color:#444;letter-spacing:-0.248px;white-space:nowrap;transform:scaleX(0.9474);transform-origin:0 0;z-index:5">Taşınmaz Bedelleri</div>
<div style="position:absolute;left:250.50px;top:183.25px;font-size:10px;line-height:11.170px;height:11.170px;font-weight:normal;font-style:normal;color:#1a1a1a;letter-spacing:-0.088px;white-space:nowrap;transform:scaleX(0.9848);transform-origin:0 0;-webkit-text-stroke:0.45px #1a1a1a;z-index:5">Yıl</div>
<div style="position:absolute;left:431.50px;top:183.25px;font-size:10px;line-height:11.170px;height:11.170px;font-weight:normal;font-style:normal;color:#1a1a1a;letter-spacing:-0.073px;white-space:nowrap;transform:scaleX(0.9848);transform-origin:0 0;-webkit-text-stroke:0.45px #1a1a1a;z-index:5">Bedel Tipi</div>
<div style="position:absolute;left:611.50px;top:183.25px;font-size:10px;line-height:11.170px;height:11.170px;font-weight:normal;font-style:normal;color:#1a1a1a;letter-spacing:-0.071px;white-space:nowrap;transform:scaleX(0.9848);transform-origin:0 0;-webkit-text-stroke:0.45px #1a1a1a;z-index:5">Birim Fiyat</div>
<div style="position:absolute;left:791.50px;top:183.25px;font-size:10px;line-height:11.170px;height:11.170px;font-weight:normal;font-style:normal;color:#1a1a1a;letter-spacing:-0.091px;white-space:nowrap;transform:scaleX(0.9848);transform-origin:0 0;-webkit-text-stroke:0.45px #1a1a1a;z-index:5">Yüz Ölçümü</div>
<div style="position:absolute;left:875.50px;top:183.25px;font-size:10px;line-height:11.170px;height:11.170px;font-weight:normal;font-style:normal;color:#1a1a1a;letter-spacing:-0.073px;white-space:nowrap;transform:scaleX(0.9848);transform-origin:0 0;-webkit-text-stroke:0.45px #1a1a1a;z-index:5">Bedel Miktarı</div>
<div style="position:absolute;left:969.50px;top:183.25px;font-size:10px;line-height:11.170px;height:11.170px;font-weight:normal;font-style:normal;color:#1a1a1a;letter-spacing:-0.096px;white-space:nowrap;transform:scaleX(0.9848);transform-origin:0 0;-webkit-text-stroke:0.45px #1a1a1a;z-index:5">Bedel</div>
<div style="position:absolute;left:1043.50px;top:183.25px;font-size:10px;line-height:11.170px;height:11.170px;font-weight:normal;font-style:normal;color:#1a1a1a;letter-spacing:-0.066px;white-space:nowrap;transform:scaleX(0.9848);transform-origin:0 0;-webkit-text-stroke:0.45px #1a1a1a;z-index:5">Geçerlilik Başlangıç Tarihi</div>
<div style="position:absolute;left:1207.50px;top:183.25px;font-size:10px;line-height:11.170px;height:11.170px;font-weight:normal;font-style:normal;color:#1a1a1a;letter-spacing:-0.061px;white-space:nowrap;transform:scaleX(0.9848);transform-origin:0 0;-webkit-text-stroke:0.45px #1a1a1a;z-index:5">Geçerlilik Bitiş Tarihi</div>
<div style="position:absolute;left:260.00px;top:214.45px;font-size:10px;line-height:11.170px;height:11.170px;font-weight:normal;font-style:normal;color:#555;letter-spacing:-0.371px;white-space:nowrap;transform:scaleX(0.9474);transform-origin:0 0;z-index:5">2024</div>
<div style="position:absolute;left:440.00px;top:214.45px;font-size:10px;line-height:11.170px;height:11.170px;font-weight:normal;font-style:normal;color:#555;letter-spacing:-0.253px;white-space:nowrap;transform:scaleX(0.9474);transform-origin:0 0;z-index:5">Rayiç Bedeli</div>
<div style="position:absolute;left:620.00px;top:214.45px;font-size:10px;line-height:11.170px;height:11.170px;font-weight:normal;font-style:normal;color:#555;letter-spacing:-0.417px;white-space:nowrap;transform:scaleX(0.9474);transform-origin:0 0;z-index:5">234</div>
<div style="position:absolute;left:791.80px;top:214.35px;font-size:10px;line-height:11.170px;height:11.170px;font-weight:normal;font-style:normal;color:#222;letter-spacing:-0.081px;white-space:nowrap;transform:scaleX(0.9225);transform-origin:0 0;z-index:5">3508.22</div>
<div style="position:absolute;left:875.80px;top:214.35px;font-size:10px;line-height:11.170px;height:11.170px;font-weight:normal;font-style:normal;color:#222;letter-spacing:0.000px;white-space:nowrap;transform:scaleX(0.8500);transform-origin:0 0;z-index:5">-</div>
<div style="position:absolute;left:969.80px;top:214.35px;font-size:10px;line-height:11.170px;height:11.170px;font-weight:normal;font-style:normal;color:#222;letter-spacing:-0.078px;white-space:nowrap;transform:scaleX(0.9190);transform-origin:0 0;z-index:5">821.484,80</div>
<div style="position:absolute;left:1043.80px;top:214.35px;font-size:10px;line-height:11.170px;height:11.170px;font-weight:normal;font-style:normal;color:#222;letter-spacing:0.000px;white-space:nowrap;transform:scaleX(0.8500);transform-origin:0 0;z-index:5">-</div>
<div style="position:absolute;left:1207.80px;top:214.35px;font-size:10px;line-height:11.170px;height:11.170px;font-weight:normal;font-style:normal;color:#222;letter-spacing:0.000px;white-space:nowrap;transform:scaleX(0.8500);transform-origin:0 0;z-index:5">-</div>
<div style="position:absolute;left:200.50px;top:251.95px;font-size:10px;line-height:11.170px;height:11.170px;font-weight:normal;font-style:normal;color:#222;letter-spacing:-0.174px;white-space:nowrap;transform:scaleX(0.9570);transform-origin:0 0;z-index:5">1 kayıttan 1-1 arası gösteriliyor.</div>
<div style="position:absolute;left:214.80px;top:322.92px;font-size:16px;line-height:17.872px;height:17.872px;font-weight:bold;font-style:normal;color:#063f86;letter-spacing:-0.294px;white-space:nowrap;transform:scaleX(0.9621);transform-origin:0 0;z-index:5">Tahsis Listesi</div>
<div style="position:absolute;left:222.80px;top:372.50px;font-size:10.5px;line-height:11.729px;height:11.729px;font-weight:normal;font-style:normal;color:#fff;letter-spacing:-0.452px;white-space:nowrap;transform:scaleX(0.9058);transform-origin:0 0;-webkit-text-stroke:0.4px #fff;z-index:5">Yeni Tahsis</div>
<div style="position:absolute;left:292.50px;top:373.25px;font-size:10px;line-height:11.170px;height:11.170px;font-weight:normal;font-style:normal;color:#222;letter-spacing:-0.223px;white-space:nowrap;transform:scaleX(0.9471);transform-origin:0 0;z-index:5">Filtre</div>
<div style="position:absolute;left:338.20px;top:372.45px;font-size:10px;line-height:11.170px;height:11.170px;font-weight:normal;font-style:normal;color:#fff;letter-spacing:-0.229px;white-space:nowrap;transform:scaleX(0.9492);transform-origin:0 0;-webkit-text-stroke:0.4px #fff;z-index:5">Toplu işlem Başlat</div>
<div style="position:absolute;left:434.00px;top:372.45px;font-size:10px;line-height:11.170px;height:11.170px;font-weight:normal;font-style:normal;color:#fff;letter-spacing:-0.274px;white-space:nowrap;transform:scaleX(0.9450);transform-origin:0 0;-webkit-text-stroke:0.4px #fff;z-index:5">Toplu Tahsis Düşme</div>
<div style="position:absolute;clip-path:inset(-6px 0.00px -6px -6px);left:364.00px;top:410.45px;font-size:10px;line-height:11.170px;height:11.170px;font-weight:normal;font-style:normal;color:#1a1a1a;letter-spacing:-0.096px;white-space:nowrap;transform:scaleX(0.9796);transform-origin:0 0;-webkit-text-stroke:0.45px #1a1a1a;z-index:8">Tahsis İşlemleri Dosya No</div>
<div style="position:absolute;clip-path:inset(-6px 0.00px -6px -6px);left:502.00px;top:410.45px;font-size:10px;line-height:11.170px;height:11.170px;font-weight:normal;font-style:normal;color:#1a1a1a;letter-spacing:-0.117px;white-space:nowrap;transform:scaleX(0.9796);transform-origin:0 0;-webkit-text-stroke:0.45px #1a1a1a;z-index:8">Taşınmaz No</div>
<div style="position:absolute;clip-path:inset(-6px 0.00px -6px -6px);left:584.00px;top:410.45px;font-size:10px;line-height:11.170px;height:11.170px;font-weight:normal;font-style:normal;color:#1a1a1a;letter-spacing:-0.115px;white-space:nowrap;transform:scaleX(0.9796);transform-origin:0 0;-webkit-text-stroke:0.45px #1a1a1a;z-index:8">Zemin Ref</div>
<div style="position:absolute;clip-path:inset(-6px 0.00px -6px -6px);left:655.00px;top:410.45px;font-size:10px;line-height:11.170px;height:11.170px;font-weight:normal;font-style:normal;color:#1a1a1a;letter-spacing:-0.100px;white-space:nowrap;transform:scaleX(0.9796);transform-origin:0 0;-webkit-text-stroke:0.45px #1a1a1a;z-index:8">İl</div>
<div style="position:absolute;clip-path:inset(-6px 0.00px -6px -6px);left:710.00px;top:410.45px;font-size:10px;line-height:11.170px;height:11.170px;font-weight:normal;font-style:normal;color:#1a1a1a;letter-spacing:-0.104px;white-space:nowrap;transform:scaleX(0.9796);transform-origin:0 0;-webkit-text-stroke:0.45px #1a1a1a;z-index:8">İlçe</div>
<div style="position:absolute;clip-path:inset(-6px 0.00px -6px -6px);left:760.00px;top:410.45px;font-size:10px;line-height:11.170px;height:11.170px;font-weight:normal;font-style:normal;color:#1a1a1a;letter-spacing:-0.117px;white-space:nowrap;transform:scaleX(0.9796);transform-origin:0 0;-webkit-text-stroke:0.45px #1a1a1a;z-index:8">Mahalle</div>
<div style="position:absolute;clip-path:inset(-6px 0.00px -6px -6px);left:821.00px;top:410.45px;font-size:10px;line-height:11.170px;height:11.170px;font-weight:normal;font-style:normal;color:#1a1a1a;letter-spacing:-0.133px;white-space:nowrap;transform:scaleX(0.9796);transform-origin:0 0;-webkit-text-stroke:0.45px #1a1a1a;z-index:8">Ada No</div>
<div style="position:absolute;clip-path:inset(-6px 0.00px -6px -6px);left:881.00px;top:410.45px;font-size:10px;line-height:11.170px;height:11.170px;font-weight:normal;font-style:normal;color:#1a1a1a;letter-spacing:-0.110px;white-space:nowrap;transform:scaleX(0.9796);transform-origin:0 0;-webkit-text-stroke:0.45px #1a1a1a;z-index:8">Parsel No</div>
<div style="position:absolute;clip-path:inset(-6px 0.00px -6px -6px);left:949.00px;top:410.45px;font-size:10px;line-height:11.170px;height:11.170px;font-weight:normal;font-style:normal;color:#1a1a1a;letter-spacing:-0.147px;white-space:nowrap;transform:scaleX(0.9796);transform-origin:0 0;-webkit-text-stroke:0.45px #1a1a1a;z-index:8">Cadde</div>
<div style="position:absolute;clip-path:inset(-6px 0.00px -6px -6px);left:1003.00px;top:410.45px;font-size:10px;line-height:11.170px;height:11.170px;font-weight:normal;font-style:normal;color:#1a1a1a;letter-spacing:-0.139px;white-space:nowrap;transform:scaleX(0.9796);transform-origin:0 0;-webkit-text-stroke:0.45px #1a1a1a;z-index:8">Sokak</div>
<div style="position:absolute;clip-path:inset(-6px 0.00px -6px -6px);left:1055.00px;top:410.45px;font-size:10px;line-height:11.170px;height:11.170px;font-weight:normal;font-style:normal;color:#1a1a1a;letter-spacing:-0.110px;white-space:nowrap;transform:scaleX(0.9796);transform-origin:0 0;-webkit-text-stroke:0.45px #1a1a1a;z-index:8">Bağımsız Bölüm No</div>
<div style="position:absolute;clip-path:inset(-6px 0.00px -6px -6px);left:1168.00px;top:410.45px;font-size:10px;line-height:11.170px;height:11.170px;font-weight:normal;font-style:normal;color:#1a1a1a;letter-spacing:-0.092px;white-space:nowrap;transform:scaleX(0.9796);transform-origin:0 0;-webkit-text-stroke:0.45px #1a1a1a;z-index:8">Blok/Giriş/Kat/Daire</div>
<div style="position:absolute;clip-path:inset(-6px 66.42px -6px -6px);left:1284.00px;top:410.45px;font-size:10px;line-height:11.170px;height:11.170px;font-weight:normal;font-style:normal;color:#1a1a1a;letter-spacing:-0.112px;white-space:nowrap;transform:scaleX(0.9796);transform-origin:0 0;-webkit-text-stroke:0.45px #1a1a1a;z-index:8">Taşınmaz Yüzölçümü</div>
<div style="position:absolute;clip-path:inset(-6px 0.00px -6px -6px);left:363.50px;top:444.15px;font-size:10px;line-height:11.170px;height:11.170px;font-weight:normal;font-style:normal;color:#333;letter-spacing:-0.089px;white-space:nowrap;transform:scaleX(0.9312);transform-origin:0 0;z-index:8">5606</div>
<div style="position:absolute;clip-path:inset(-6px 0.00px -6px -6px);left:501.50px;top:444.15px;font-size:10px;line-height:11.170px;height:11.170px;font-weight:normal;font-style:normal;color:#333;letter-spacing:-0.073px;white-space:nowrap;transform:scaleX(0.9312);transform-origin:0 0;z-index:8">26150117428</div>
<div style="position:absolute;clip-path:inset(-6px 0.00px -6px -6px);left:583.50px;top:444.15px;font-size:10px;line-height:11.170px;height:11.170px;font-weight:normal;font-style:normal;color:#333;letter-spacing:-0.076px;white-space:nowrap;transform:scaleX(0.9312);transform-origin:0 0;z-index:8">91328172</div>
<div style="position:absolute;clip-path:inset(-6px 0.00px -6px -6px);left:654.50px;top:444.15px;font-size:10px;line-height:11.170px;height:11.170px;font-weight:normal;font-style:normal;color:#333;letter-spacing:-0.210px;white-space:nowrap;transform:scaleX(0.8157);transform-origin:0 0;z-index:8">ESKISEHIR</div>
<div style="position:absolute;clip-path:inset(-6px 0.00px -6px -6px);left:709.50px;top:444.15px;font-size:10px;line-height:11.170px;height:11.170px;font-weight:normal;font-style:normal;color:#333;letter-spacing:-0.220px;white-space:nowrap;transform:scaleX(0.8157);transform-origin:0 0;z-index:8">TEPEBASI</div>
<div style="position:absolute;clip-path:inset(-6px 0.00px -6px -6px);left:759.50px;top:444.15px;font-size:10px;line-height:11.170px;height:11.170px;font-weight:normal;font-style:normal;color:#333;letter-spacing:-0.221px;white-space:nowrap;transform:scaleX(0.8157);transform-origin:0 0;z-index:8">SAKINTEPE</div>
<div style="position:absolute;clip-path:inset(-6px 0.00px -6px -6px);left:820.50px;top:444.15px;font-size:10px;line-height:11.170px;height:11.170px;font-weight:normal;font-style:normal;color:#333;letter-spacing:-0.083px;white-space:nowrap;transform:scaleX(0.9312);transform-origin:0 0;z-index:8">12651</div>
<div style="position:absolute;clip-path:inset(-6px 0.00px -6px -6px);left:880.50px;top:444.15px;font-size:10px;line-height:11.170px;height:11.170px;font-weight:normal;font-style:normal;color:#333;letter-spacing:-0.133px;white-space:nowrap;transform:scaleX(0.9312);transform-origin:0 0;z-index:8">44</div>
<div style="position:absolute;clip-path:inset(-6px 0.00px -6px -6px);left:948.50px;top:444.15px;font-size:10px;line-height:11.170px;height:11.170px;font-weight:normal;font-style:normal;color:#333;letter-spacing:0.000px;white-space:nowrap;transform:scaleX(0.8500);transform-origin:0 0;z-index:8">-</div>
<div style="position:absolute;clip-path:inset(-6px 0.00px -6px -6px);left:1002.50px;top:444.15px;font-size:10px;line-height:11.170px;height:11.170px;font-weight:normal;font-style:normal;color:#333;letter-spacing:0.000px;white-space:nowrap;transform:scaleX(0.8500);transform-origin:0 0;z-index:8">-</div>
<div style="position:absolute;clip-path:inset(-6px 0.00px -6px -6px);left:1167.50px;top:444.15px;font-size:10px;line-height:11.170px;height:11.170px;font-weight:normal;font-style:normal;color:#333;letter-spacing:0.000px;white-space:nowrap;transform:scaleX(0.8500);transform-origin:0 0;z-index:8">-</div>
<div style="position:absolute;clip-path:inset(-6px 1.40px -6px -6px);left:1283.50px;top:444.15px;font-size:10px;line-height:11.170px;height:11.170px;font-weight:normal;font-style:normal;color:#333;letter-spacing:-0.084px;white-space:nowrap;transform:scaleX(0.9210);transform-origin:0 0;z-index:8">1971.4</div>
<div style="position:absolute;clip-path:inset(-6px 0.00px -6px -6px);left:363.50px;top:484.15px;font-size:10px;line-height:11.170px;height:11.170px;font-weight:normal;font-style:normal;color:#333;letter-spacing:-0.089px;white-space:nowrap;transform:scaleX(0.9312);transform-origin:0 0;z-index:8">5607</div>
<div style="position:absolute;clip-path:inset(-6px 0.00px -6px -6px);left:501.50px;top:484.15px;font-size:10px;line-height:11.170px;height:11.170px;font-weight:normal;font-style:normal;color:#333;letter-spacing:-0.073px;white-space:nowrap;transform:scaleX(0.9312);transform-origin:0 0;z-index:8">36010126842</div>
<div style="position:absolute;clip-path:inset(-6px 0.00px -6px -6px);left:583.50px;top:484.15px;font-size:10px;line-height:11.170px;height:11.170px;font-weight:normal;font-style:normal;color:#333;letter-spacing:-0.075px;white-space:nowrap;transform:scaleX(0.9312);transform-origin:0 0;z-index:8">102563195</div>
<div style="position:absolute;clip-path:inset(-6px 0.00px -6px -6px);left:654.50px;top:484.15px;font-size:10px;line-height:11.170px;height:11.170px;font-weight:normal;font-style:normal;color:#333;letter-spacing:-0.286px;white-space:nowrap;transform:scaleX(0.8157);transform-origin:0 0;z-index:8">KARS</div>
<div style="position:absolute;clip-path:inset(-6px 0.00px -6px -6px);left:709.50px;top:484.15px;font-size:10px;line-height:11.170px;height:11.170px;font-weight:normal;font-style:normal;color:#333;letter-spacing:-0.263px;white-space:nowrap;transform:scaleX(0.8157);transform-origin:0 0;z-index:8">MERKEZ</div>
<div style="position:absolute;clip-path:inset(-6px 0.00px -6px -6px);left:759.50px;top:484.15px;font-size:10px;line-height:11.170px;height:11.170px;font-weight:normal;font-style:normal;color:#333;letter-spacing:-0.257px;white-space:nowrap;transform:scaleX(0.8157);transform-origin:0 0;z-index:8">KARADAG</div>
<div style="position:absolute;clip-path:inset(-6px 0.00px -6px -6px);left:820.50px;top:484.15px;font-size:10px;line-height:11.170px;height:11.170px;font-weight:normal;font-style:normal;color:#333;letter-spacing:-0.100px;white-space:nowrap;transform:scaleX(0.9312);transform-origin:0 0;z-index:8">576</div>
<div style="position:absolute;clip-path:inset(-6px 0.00px -6px -6px);left:880.50px;top:484.15px;font-size:10px;line-height:11.170px;height:11.170px;font-weight:normal;font-style:normal;color:#333;letter-spacing:-0.133px;white-space:nowrap;transform:scaleX(0.9312);transform-origin:0 0;z-index:8">97</div>
<div style="position:absolute;clip-path:inset(-6px 0.00px -6px -6px);left:948.50px;top:484.15px;font-size:10px;line-height:11.170px;height:11.170px;font-weight:normal;font-style:normal;color:#333;letter-spacing:0.000px;white-space:nowrap;transform:scaleX(0.8500);transform-origin:0 0;z-index:8">-</div>
<div style="position:absolute;clip-path:inset(-6px 0.00px -6px -6px);left:1002.50px;top:484.15px;font-size:10px;line-height:11.170px;height:11.170px;font-weight:normal;font-style:normal;color:#333;letter-spacing:0.000px;white-space:nowrap;transform:scaleX(0.8500);transform-origin:0 0;z-index:8">-</div>
<div style="position:absolute;clip-path:inset(-6px 0.00px -6px -6px);left:1167.50px;top:484.15px;font-size:10px;line-height:11.170px;height:11.170px;font-weight:normal;font-style:normal;color:#333;letter-spacing:0.000px;white-space:nowrap;transform:scaleX(0.8500);transform-origin:0 0;z-index:8">-</div>
<div style="position:absolute;clip-path:inset(-6px 0.00px -6px -6px);left:1283.50px;top:484.15px;font-size:10px;line-height:11.170px;height:11.170px;font-weight:normal;font-style:normal;color:#333;letter-spacing:-0.088px;white-space:nowrap;transform:scaleX(0.9190);transform-origin:0 0;z-index:8">42.66</div>
<div style="position:absolute;clip-path:inset(-6px 0.00px -6px -6px);left:363.50px;top:524.15px;font-size:10px;line-height:11.170px;height:11.170px;font-weight:normal;font-style:normal;color:#333;letter-spacing:-0.089px;white-space:nowrap;transform:scaleX(0.9312);transform-origin:0 0;z-index:8">5608</div>
<div style="position:absolute;clip-path:inset(-6px 0.00px -6px -6px);left:501.50px;top:524.15px;font-size:10px;line-height:11.170px;height:11.170px;font-weight:normal;font-style:normal;color:#333;letter-spacing:-0.073px;white-space:nowrap;transform:scaleX(0.9312);transform-origin:0 0;z-index:8">26150117533</div>
<div style="position:absolute;clip-path:inset(-6px 0.00px -6px -6px);left:583.50px;top:524.15px;font-size:10px;line-height:11.170px;height:11.170px;font-weight:normal;font-style:normal;color:#333;letter-spacing:-0.076px;white-space:nowrap;transform:scaleX(0.9312);transform-origin:0 0;z-index:8">80340367</div>
<div style="position:absolute;clip-path:inset(-6px 0.00px -6px -6px);left:654.50px;top:524.15px;font-size:10px;line-height:11.170px;height:11.170px;font-weight:normal;font-style:normal;color:#333;letter-spacing:-0.210px;white-space:nowrap;transform:scaleX(0.8157);transform-origin:0 0;z-index:8">ESKISEHIR</div>
<div style="position:absolute;clip-path:inset(-6px 0.00px -6px -6px);left:709.50px;top:524.15px;font-size:10px;line-height:11.170px;height:11.170px;font-weight:normal;font-style:normal;color:#333;letter-spacing:-0.220px;white-space:nowrap;transform:scaleX(0.8157);transform-origin:0 0;z-index:8">TEPEBASI</div>
<div style="position:absolute;clip-path:inset(-6px 0.00px -6px -6px);left:759.50px;top:524.15px;font-size:10px;line-height:11.170px;height:11.170px;font-weight:normal;font-style:normal;color:#333;letter-spacing:-0.222px;white-space:nowrap;transform:scaleX(0.8157);transform-origin:0 0;z-index:8">GAZIPASA</div>
<div style="position:absolute;clip-path:inset(-6px 0.00px -6px -6px);left:820.50px;top:524.15px;font-size:10px;line-height:11.170px;height:11.170px;font-weight:normal;font-style:normal;color:#333;letter-spacing:-0.081px;white-space:nowrap;transform:scaleX(0.9312);transform-origin:0 0;z-index:8">11933</div>
<div style="position:absolute;clip-path:inset(-6px 0.00px -6px -6px);left:880.50px;top:524.15px;font-size:10px;line-height:11.170px;height:11.170px;font-weight:normal;font-style:normal;color:#333;letter-spacing:-0.133px;white-space:nowrap;transform:scaleX(0.9312);transform-origin:0 0;z-index:8">39</div>
<div style="position:absolute;clip-path:inset(-6px 0.00px -6px -6px);left:948.50px;top:524.15px;font-size:10px;line-height:11.170px;height:11.170px;font-weight:normal;font-style:normal;color:#333;letter-spacing:0.000px;white-space:nowrap;transform:scaleX(0.8500);transform-origin:0 0;z-index:8">-</div>
<div style="position:absolute;clip-path:inset(-6px 0.00px -6px -6px);left:1002.50px;top:524.15px;font-size:10px;line-height:11.170px;height:11.170px;font-weight:normal;font-style:normal;color:#333;letter-spacing:0.000px;white-space:nowrap;transform:scaleX(0.8500);transform-origin:0 0;z-index:8">-</div>
<div style="position:absolute;clip-path:inset(-6px 0.00px -6px -6px);left:1167.50px;top:524.15px;font-size:10px;line-height:11.170px;height:11.170px;font-weight:normal;font-style:normal;color:#333;letter-spacing:0.000px;white-space:nowrap;transform:scaleX(0.8500);transform-origin:0 0;z-index:8">-</div>
<div style="position:absolute;clip-path:inset(-6px 1.40px -6px -6px);left:1283.50px;top:524.15px;font-size:10px;line-height:11.170px;height:11.170px;font-weight:normal;font-style:normal;color:#333;letter-spacing:-0.084px;white-space:nowrap;transform:scaleX(0.9210);transform-origin:0 0;z-index:8">13944.</div>
<div style="position:absolute;clip-path:inset(-6px 0.00px -6px -6px);left:363.50px;top:563.15px;font-size:10px;line-height:11.170px;height:11.170px;font-weight:normal;font-style:normal;color:#333;letter-spacing:-0.089px;white-space:nowrap;transform:scaleX(0.9312);transform-origin:0 0;z-index:8">5609</div>
<div style="position:absolute;clip-path:inset(-6px 0.00px -6px -6px);left:501.50px;top:563.15px;font-size:10px;line-height:11.170px;height:11.170px;font-weight:normal;font-style:normal;color:#333;letter-spacing:-0.073px;white-space:nowrap;transform:scaleX(0.9312);transform-origin:0 0;z-index:8">26150117531</div>
<div style="position:absolute;clip-path:inset(-6px 0.00px -6px -6px);left:583.50px;top:563.15px;font-size:10px;line-height:11.170px;height:11.170px;font-weight:normal;font-style:normal;color:#333;letter-spacing:-0.076px;white-space:nowrap;transform:scaleX(0.9312);transform-origin:0 0;z-index:8">80340891</div>
<div style="position:absolute;clip-path:inset(-6px 0.00px -6px -6px);left:654.50px;top:563.15px;font-size:10px;line-height:11.170px;height:11.170px;font-weight:normal;font-style:normal;color:#333;letter-spacing:-0.210px;white-space:nowrap;transform:scaleX(0.8157);transform-origin:0 0;z-index:8">ESKISEHIR</div>
<div style="position:absolute;clip-path:inset(-6px 0.00px -6px -6px);left:709.50px;top:563.15px;font-size:10px;line-height:11.170px;height:11.170px;font-weight:normal;font-style:normal;color:#333;letter-spacing:-0.220px;white-space:nowrap;transform:scaleX(0.8157);transform-origin:0 0;z-index:8">TEPEBASI</div>
<div style="position:absolute;clip-path:inset(-6px 0.00px -6px -6px);left:759.50px;top:563.15px;font-size:10px;line-height:11.170px;height:11.170px;font-weight:normal;font-style:normal;color:#333;letter-spacing:-0.222px;white-space:nowrap;transform:scaleX(0.8157);transform-origin:0 0;z-index:8">GAZIPASA</div>
<div style="position:absolute;clip-path:inset(-6px 0.00px -6px -6px);left:820.50px;top:563.15px;font-size:10px;line-height:11.170px;height:11.170px;font-weight:normal;font-style:normal;color:#333;letter-spacing:-0.081px;white-space:nowrap;transform:scaleX(0.9312);transform-origin:0 0;z-index:8">11932</div>
<div style="position:absolute;clip-path:inset(-6px 0.00px -6px -6px);left:880.50px;top:563.15px;font-size:10px;line-height:11.170px;height:11.170px;font-weight:normal;font-style:normal;color:#333;letter-spacing:-0.096px;white-space:nowrap;transform:scaleX(0.9312);transform-origin:0 0;z-index:8">113</div>
<div style="position:absolute;clip-path:inset(-6px 0.00px -6px -6px);left:948.50px;top:563.15px;font-size:10px;line-height:11.170px;height:11.170px;font-weight:normal;font-style:normal;color:#333;letter-spacing:0.000px;white-space:nowrap;transform:scaleX(0.8500);transform-origin:0 0;z-index:8">-</div>
<div style="position:absolute;clip-path:inset(-6px 0.00px -6px -6px);left:1002.50px;top:563.15px;font-size:10px;line-height:11.170px;height:11.170px;font-weight:normal;font-style:normal;color:#333;letter-spacing:0.000px;white-space:nowrap;transform:scaleX(0.8500);transform-origin:0 0;z-index:8">-</div>
<div style="position:absolute;clip-path:inset(-6px 0.00px -6px -6px);left:1167.50px;top:563.15px;font-size:10px;line-height:11.170px;height:11.170px;font-weight:normal;font-style:normal;color:#333;letter-spacing:0.000px;white-space:nowrap;transform:scaleX(0.8500);transform-origin:0 0;z-index:8">-</div>
<div style="position:absolute;clip-path:inset(-6px 0.00px -6px -6px);left:1283.50px;top:563.15px;font-size:10px;line-height:11.170px;height:11.170px;font-weight:normal;font-style:normal;color:#333;letter-spacing:-0.100px;white-space:nowrap;transform:scaleX(0.9312);transform-origin:0 0;z-index:8">280</div>
</body></html>
